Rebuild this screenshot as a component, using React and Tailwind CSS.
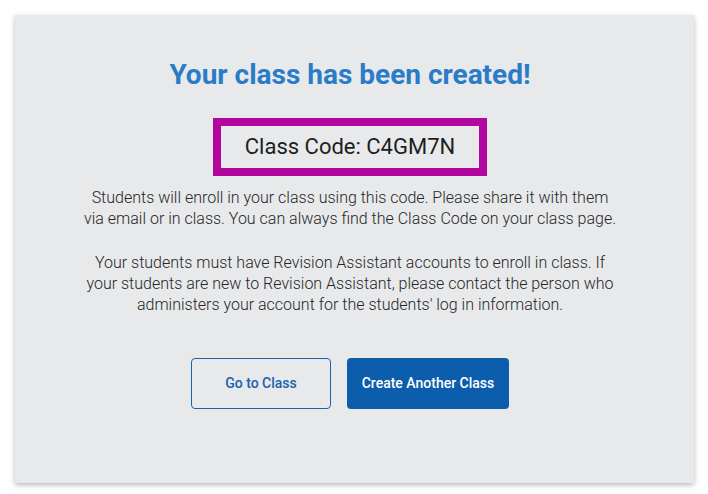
export default function App() {
  return (
    <div className="w-[708px] h-[494px] bg-white pt-[15px] pl-[15px]" style={{ fontFamily: "Roboto, 'Liberation Sans', sans-serif" }}>
      <div className="w-[679px] h-[468px] bg-[#e8e9eb] shadow-[0_2px_5px_rgba(0,0,0,0.28)] flex flex-col items-center pt-[44px] pr-[9px]">
        <h1 className="text-[28px] leading-[32px] font-bold text-[#2a7bc8]">
          Your class has been created!
        </h1>

        <div className="mt-[27px] w-[274px] h-[58px] border-[8px] border-[#b3069e] flex items-center justify-center">
          <span className="text-[22px] text-[#1e1e1e] leading-none">Class Code: C4GM7N</span>
        </div>

        <div className="mt-[11px] w-[580px] text-center text-[16px] leading-[21px] text-[#262626] font-light">
          <p>
            Students will enroll in your class using this code. Please share it with them
            <br />
            via email or in class. You can always find the Class Code on your class page.
          </p>
          <p className="mt-[23px]">
            Your students must have Revision Assistant accounts to enroll in class. If
            <br />
            your students are new to Revision Assistant, please contact the person who
            <br />
            administers your account for the students' log in information.
          </p>
        </div>

        <div className="mt-[43px] flex gap-[16px]">
          <button className="w-[140px] h-[51px] rounded-[4px] border border-[#1a62ad] text-[#1a62ad] text-[14px] font-medium">
            Go to Class
          </button>
          <button className="w-[162px] h-[51px] rounded-[4px] bg-[#0c5dab] text-white text-[14px] font-medium">
            Create Another Class
          </button>
        </div>
      </div>
    </div>
  );
}
